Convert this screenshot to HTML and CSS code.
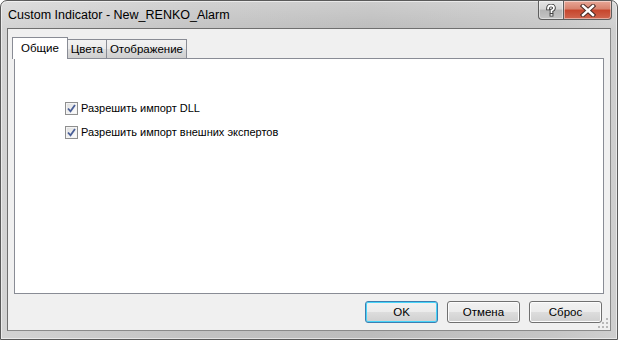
FILE: index.html
```html
<!DOCTYPE html>
<html lang="ru">
<head>
    <meta charset="UTF-8">
    <title>Custom Indicator - New_RENKO_Alarm</title>
    <link rel="stylesheet" href="styles.css">
</head>
<body>
    <div class="window">
        <!-- Title bar -->
        <div class="titlebar">
            <span class="title">Custom Indicator - New_RENKO_Alarm</span>
            <div class="caption-buttons">
                <div class="cap-btn help">
                    <svg width="12" height="13" viewBox="0 0 12 13">
                        <path d="M3 4.5 Q3 1.5 6 1.5 Q9 1.5 9 4 Q9 5.6 6.5 6.6 L6.5 8" fill="none" stroke="#3a3a3a" stroke-width="3.6" stroke-linecap="square"/>
                        <rect x="4.6" y="9.3" width="3.8" height="3.2" fill="#3a3a3a"/>
                        <path d="M3 4.5 Q3 1.5 6 1.5 Q9 1.5 9 4 Q9 5.6 6.5 6.6 L6.5 8" fill="none" stroke="#fff" stroke-width="1.8" stroke-linecap="square"/>
                        <rect x="5.5" y="10.1" width="2" height="1.6" fill="#fff"/>
                    </svg>
                </div>
                <div class="cap-btn close">
                    <svg width="16" height="13" viewBox="0 0 16 13">
                        <path d="M3 2 L13 11 M13 2 L3 11" stroke="#4a2a24" stroke-width="4.4" stroke-linecap="square"/>
                        <path d="M3 2 L13 11 M13 2 L3 11" stroke="#fff" stroke-width="2.4" stroke-linecap="square"/>
                    </svg>
                </div>
            </div>
        </div>
        <!-- Client area -->
        <div class="client">
            <div class="tabs">
                <div class="tab active">Общие</div>
                <div class="tab">Цвета</div>
                <div class="tab">Отображение</div>
            </div>
            <div class="panel">
                <label class="check">
                    <span class="box"><svg width="9" height="9" viewBox="0 0 9 9"><path d="M1 4.5 L3.5 7.3 L8 1" fill="none" stroke="#4a5f97" stroke-width="1.8"/></svg></span>
                    Разрешить импорт DLL
                </label>
                <label class="check">
                    <span class="box"><svg width="9" height="9" viewBox="0 0 9 9"><path d="M1 4.5 L3.5 7.3 L8 1" fill="none" stroke="#4a5f97" stroke-width="1.8"/></svg></span>
                    Разрешить импорт внешних экспертов
                </label>
            </div>
            <div class="actions">
                <button class="btn default">OK</button>
                <button class="btn">Отмена</button>
                <button class="btn">Сброс</button>
            </div>
            <svg class="grip" width="11" height="11" viewBox="0 0 11 11">
                <g fill="#b8b8b8">
                    <rect x="8" y="0" width="2" height="2"/>
                    <rect x="4" y="4" width="2" height="2"/><rect x="8" y="4" width="2" height="2"/>
                    <rect x="0" y="8" width="2" height="2"/><rect x="4" y="8" width="2" height="2"/><rect x="8" y="8" width="2" height="2"/>
                </g>
            </svg>
        </div>
    </div>
</body>
</html>
```

FILE: styles.css
```css
body {
    margin: 0;
    width: 618px;
    height: 340px;
    overflow: hidden;
    background: #ffffff;
    font-family: "Liberation Sans", Arial, sans-serif;
    font-size: 11px;
    color: #000;
}
.window {
    box-sizing: border-box;
    width: 618px;
    height: 340px;
    display: flex;
    flex-direction: column;
    padding: 0 6px 8px 6px;
    border: 1px solid #5a5a5a;
    border-radius: 7px 7px 0 0;
    background:
        linear-gradient(180deg, rgba(255,255,255,0.25) 0%, rgba(255,255,255,0) 30px),
        linear-gradient(90deg, #d3d3d3 0%, #c3c3c3 30%, #bcbcbc 60%, #c6c6c6 90%, #cfcfcf 100%);
    box-shadow: inset 0 0 0 1px rgba(255,255,255,0.55);
}
.titlebar {
    height: 27px;
    flex: none;
    display: flex;
    align-items: flex-start;
}
.title {
    padding: 7px 0 0 1px;
    font-size: 12.5px;
    color: #000;
}
.caption-buttons {
    margin-left: auto;
    margin-right: -1px;
    display: flex;
}
.cap-btn {
    height: 18px;
    display: flex;
    align-items: center;
    justify-content: center;
    border: 1px solid #5e5e5e;
    border-top: none;
    box-shadow: inset 0 0 0 1px rgba(255,255,255,0.45);
}
.cap-btn.help {
    width: 24px;
    border-right: none;
    border-radius: 0 0 0 4px;
    background: linear-gradient(180deg, #e4e4e4 0%, #d4d4d4 45%, #b4b4b4 50%, #c4c4c4 100%);
}
.cap-btn.close {
    width: 47px;
    border-radius: 0 0 4px 0;
    background: linear-gradient(180deg, #e8a797 0%, #d7826d 45%, #c6452c 50%, #d0664f 100%);
}
.client {
    position: relative;
    flex: 1;
    display: flex;
    flex-direction: column;
    padding: 8px 6px 0 6px;
    background: #f0f0f0;
    border: 1px solid #6f6f6f;
    border-right-color: #8a8a8a;
    border-bottom-color: #8a8a8a;
}
.tabs {
    display: flex;
    align-items: flex-end;
    height: 21px;
    position: relative;
    z-index: 1;
    font-size: 11.5px;
}
.tab {
    box-sizing: border-box;
    height: 19px;
    padding: 0 3px;
    line-height: 18px;
    border: 1px solid #898c95;
    border-bottom: none;
    margin-right: -1px;
    background: linear-gradient(180deg, #f2f2f2 0%, #ebebeb 50%, #dddddd 51%, #cfcfcf 100%);
}
.tab.active {
    height: 22px;
    margin: 0 -1px -1px -2px;
    padding: 0 8px 0 8px;
    line-height: 20px;
    background: #ffffff;
    position: relative;
    z-index: 2;
}
.panel {
    flex: 1;
    display: flex;
    flex-direction: column;
    gap: 10px;
    padding: 42px 0 0 50px;
    background: #ffffff;
    border: 1px solid #898c95;
}
.check {
    display: flex;
    align-items: center;
    gap: 3px;
    height: 14px;
}
.box {
    box-sizing: border-box;
    width: 13px;
    height: 13px;
    display: flex;
    align-items: center;
    justify-content: center;
    border: 1px solid #8f8f8f;
    background: linear-gradient(135deg, #dcdcdc 0%, #f6f6f6 70%, #ffffff 100%);
    box-shadow: inset 0 0 0 1px #f4f4f4;
}
.actions {
    flex: none;
    display: flex;
    justify-content: flex-end;
    gap: 9px;
    height: 22px;
    margin: 7px 2px 7px 0;
}
.btn {
    width: 73px;
    height: 22px;
    padding: 0;
    font-family: "Liberation Sans", Arial, sans-serif;
    font-size: 11.5px;
    color: #000;
    border: 1px solid #707070;
    border-radius: 3px;
    background: linear-gradient(180deg, #f2f2f2 0%, #ebebeb 50%, #dddddd 51%, #cfcfcf 100%);
    box-shadow: inset 0 0 0 1px #fcfcfc;
}
.btn.default {
    border-color: #3c7fb1;
    box-shadow: inset 0 0 0 1px #48d4f9;
}
.grip {
    position: absolute;
    right: 1px;
    bottom: 1px;
}
```
